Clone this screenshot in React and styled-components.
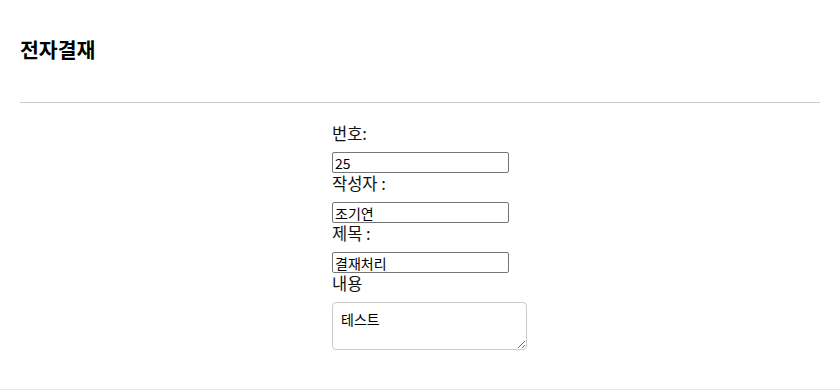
import React from "react";
import styled, { createGlobalStyle } from "styled-components";

const Global = createGlobalStyle`
  html, body { margin: 0; padding: 0; background: #fff; }
  body { font-family: "Noto Sans CJK KR", "Noto Sans", sans-serif; color: #000; }
`;

const Header = styled.header`
  margin: 0 20px;
  padding: 37px 0 41px;
  border-bottom: 1px solid #cccccc;
`;

const Title = styled.h3`
  margin: 0;
  font-size: 20.5px;
  line-height: 24px;
  font-weight: bold;
`;

const Form = styled.form`
  width: 176px;
  margin: 0 auto;
  padding-top: 20px;
  padding-bottom: 39px;
  display: flex;
  flex-direction: column;
  align-items: flex-start;
`;

const Label = styled.label`
  display: block;
  font-size: 16.5px;
  line-height: 21px;
  height: 21px;
  margin-bottom: 8px;
  color: #111;
`;

const Input = styled.input`
  box-sizing: border-box;
  width: 177px;
  height: 21px;
  flex: none;
  margin: 0;
  padding: 0 2px;
  border: 1px solid #767676;
  border-radius: 2px;
  font-family: "Noto Sans CJK KR", "Liberation Sans", sans-serif;
  font-size: 14px;
  line-height: 19px;
  color: #000;
  background: #fff;
`;

const TextArea = styled.textarea`
  box-sizing: border-box;
  width: 195px;
  height: 48px;
  flex: none;
  margin: 0;
  padding: 7px 8px;
  border: 1px solid #cccccc;
  border-radius: 4px;
  font-family: "Noto Sans CJK KR", sans-serif;
  font-size: 14px;
  line-height: 18px;
  color: #000;
`;

const Footer = styled.footer`
  border-top: 1px solid #e8e8e8;
  height: 20px;
`;

export default function App() {
  return (
    <>
      <Global />
      <Header>
        <Title>전자결재</Title>
      </Header>
      <Form>
        <Label htmlFor="no">번호:</Label>
        <Input id="no" defaultValue="25" />
        <Label htmlFor="writer">작성자 :</Label>
        <Input id="writer" defaultValue="조기연" />
        <Label htmlFor="title">제목 :</Label>
        <Input id="title" defaultValue="결재처리" />
        <Label htmlFor="content">내용</Label>
        <TextArea id="content" defaultValue="테스트" />
      </Form>
      <Footer />
    </>
  );
}
